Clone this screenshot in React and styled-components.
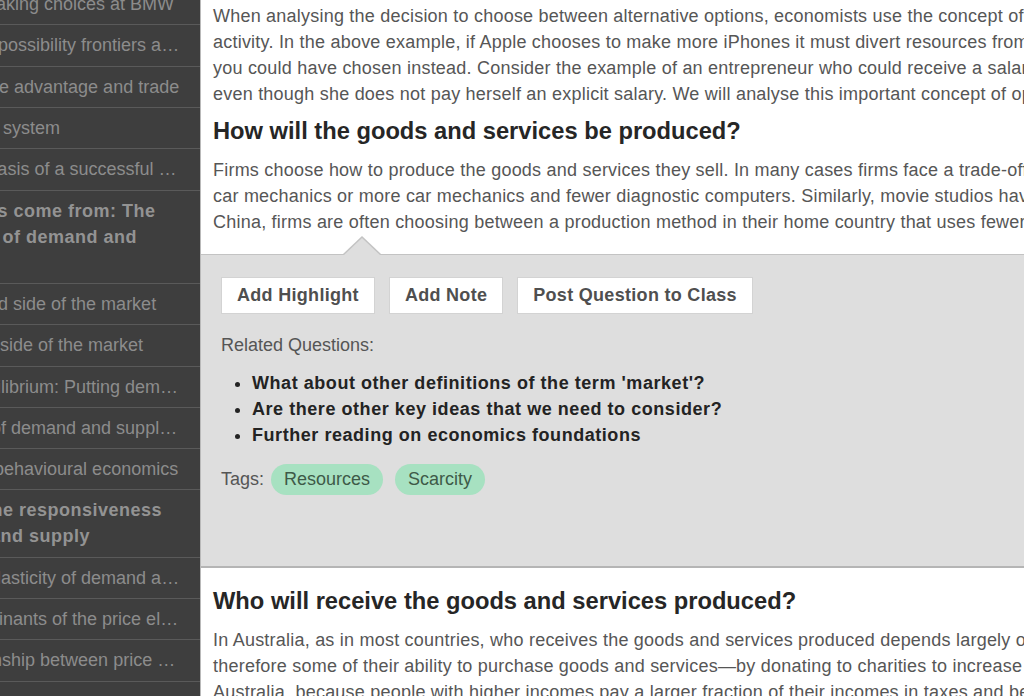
import React from 'react'
import styled, { createGlobalStyle } from 'styled-components'

const GlobalStyle = createGlobalStyle`
  html, body {
    margin: 0;
    padding: 0;
    overflow: hidden;
    background: #fff;
  }
  body {
    font-family: "Liberation Sans", Arial, sans-serif;
  }
`

const Page = styled.div`
  display: flex;
  width: 1024px;
  height: 696px;
  overflow: hidden;
`

// table of contents, scrolled sideways so the start of each title is hidden
const Sidebar = styled.nav`
  flex: 0 0 200px;
  background: #3e3e3e;
  overflow: hidden;
`

const NavList = styled.ul`
  list-style: none;
  margin: -16px 0 0 -111px;
  padding: 0;
  width: 311px;
`

const NavItem = styled.li`
  padding: 7px ${p => (p.$chapter ? 30 : 15)}px 7.32px ${p => (p.$chapter ? 0 : 18)}px;
  border-bottom: 1px solid #5a5a5a;
  font-size: 18px;
  line-height: 26px;
  color: ${p => (p.$chapter ? '#939393' : '#8c8c8c')};
  font-weight: ${p => (p.$chapter ? 700 : 400)};
  letter-spacing: ${p => (p.$chapter ? '0.5px' : '0')};
  ${p => !p.$chapter && `
    white-space: nowrap;
    overflow: hidden;
    text-overflow: ellipsis;
  `}
`

const Main = styled.main`
  flex: 1;
  min-width: 0;
  border-left: 1px solid #b9b9b9;
  overflow: hidden;
`

const Section = styled.section`
  padding: ${p => p.$top}px 0 0 12px;
`

const Para = styled.p`
  margin: 0;
  font-size: 18px;
  line-height: 26px;
  letter-spacing: 0.22px;
  color: #565656;
  white-space: nowrap;
`

const Heading = styled.h2`
  margin: ${p => p.$gap}px 0 12px;
  font-size: 23.7px;
  line-height: 28px;
  font-weight: 700;
  color: #262626;
  white-space: nowrap;
`

const NotePanel = styled.div`
  position: relative;
  height: 289px;
  margin-top: 19px;
  padding: 22px 20px 0;
  background: #dedede;
  border-top: 1px solid #c3c3c3;
  border-bottom: 2px solid #b5b5b5;

  &::before,
  &::after {
    content: '';
    position: absolute;
    width: 0;
    height: 0;
    border-style: solid;
    border-color: transparent;
  }
  &::before {
    left: 142px;
    top: -19px;
    border-width: 0 19px 18px;
    border-bottom-color: #c3c3c3;
  }
  &::after {
    left: 143px;
    top: -17px;
    border-width: 0 18px 17px;
    border-bottom-color: #dedede;
  }
`

const Actions = styled.div`
  display: flex;
  gap: 14px;
`

const ActionButton = styled.button`
  padding: 7px 15px;
  background: #fff;
  border: 1px solid #d3d3d3;
  border-radius: 0;
  font-family: inherit;
  font-size: 18px;
  line-height: 21px;
  font-weight: 700;
  letter-spacing: 0.3px;
  color: #4f4f4f;
`

const RelatedLabel = styled.div`
  margin-top: 18px;
  font-size: 18px;
  line-height: 26px;
  color: #555;
`

const QuestionList = styled.ul`
  margin: 12px 0 0;
  padding-left: 31px;
`

const Question = styled.li`
  font-size: 18px;
  line-height: 26px;
  font-weight: 700;
  letter-spacing: 0.55px;
  color: #232323;
`

const TagRow = styled.div`
  display: flex;
  align-items: center;
  margin-top: 16px;
  font-size: 18px;
`

const TagLabel = styled.span`
  margin-right: 7px;
  color: #555;
`

const Tag = styled.span`
  padding: 5px 13px;
  line-height: 21px;
  border-radius: 16px;
  background: #a7e1c1;
  color: #3e5a48;

  & + & {
    margin-left: 12px;
  }
`

const toc = [
  { title: 'Scarcity: making choices at BMW' },
  { title: 'Production possibility frontiers and trade' },
  { title: 'Comparative advantage and trade' },
  { title: 'The market system' },
  { title: 'Trust: the basis of a successful economy' },
  { title: 'Where prices come from: The interactions of demand and supply', chapter: true },
  { title: 'The demand side of the market' },
  { title: 'The supply side of the market' },
  { title: 'Market equilibrium: Putting demand and supply together' },
  { title: 'Dynamics of demand and supply curves' },
  { title: 'Insights of behavioural economics' },
  { title: 'Elasticity: the responsiveness of demand and supply', chapter: true },
  { title: 'The price elasticity of demand and supply' },
  { title: 'The determinants of the price elasticity of demand' },
  { title: 'The relationship between price elasticity and revenue' },
  { title: 'Summary' },
]

const intro = [
  'When analysing the decision to choose between alternative options, economists use the concept of opportunity cost.',
  'activity. In the above example, if Apple chooses to make more iPhones it must divert resources from making iPads.',
  'you could have chosen instead. Consider the example of an entrepreneur who could receive a salary working elsewhere,',
  'even though she does not pay herself an explicit salary. We will analyse this important concept of opportunity cost.',
]

const howText = [
  'Firms choose how to produce the goods and services they sell. In many cases firms face a trade-off between',
  'car mechanics or more car mechanics and fewer diagnostic computers. Similarly, movie studios have to choose',
  'China, firms are often choosing between a production method in their home country that uses fewer workers',
]

const whoText = [
  'In Australia, as in most countries, who receives the goods and services produced depends largely on income.',
  'therefore some of their ability to purchase goods and services\u2014by donating to charities to increase the',
  'Australia, because people with higher incomes pay a larger fraction of their incomes in taxes and benefit',
]

const questions = [
  "What about other definitions of the term 'market'?",
  'Are there other key ideas that we need to consider?',
  'Further reading on economics foundations',
]

const Lines = ({ lines }) => (
  <Para>
    {lines.map((l, i) => (
      <React.Fragment key={i}>
        {i > 0 && <br />}
        {l}
      </React.Fragment>
    ))}
  </Para>
)

export default function App() {
  return (
    <Page>
      <GlobalStyle />
      <Sidebar>
        <NavList>
          {toc.map(item => (
            <NavItem key={item.title} $chapter={item.chapter}>
              {item.title}
            </NavItem>
          ))}
        </NavList>
      </Sidebar>
      <Main>
        <Section $top={3}>
          <Lines lines={intro} />
          <Heading $gap={10}>How will the goods and services be produced?</Heading>
          <Lines lines={howText} />
        </Section>
        <NotePanel>
          <Actions>
            <ActionButton>Add Highlight</ActionButton>
            <ActionButton>Add Note</ActionButton>
            <ActionButton>Post Question to Class</ActionButton>
          </Actions>
          <RelatedLabel>Related Questions:</RelatedLabel>
          <QuestionList>
            {questions.map(q => (
              <Question key={q}>{q}</Question>
            ))}
          </QuestionList>
          <TagRow>
            <TagLabel>Tags:</TagLabel>
            <Tag>Resources</Tag>
            <Tag>Scarcity</Tag>
          </TagRow>
        </NotePanel>
        <Section $top={7}>
          <Heading $gap={12}>Who will receive the goods and services produced?</Heading>
          <Lines lines={whoText} />
        </Section>
      </Main>
    </Page>
  )
}
